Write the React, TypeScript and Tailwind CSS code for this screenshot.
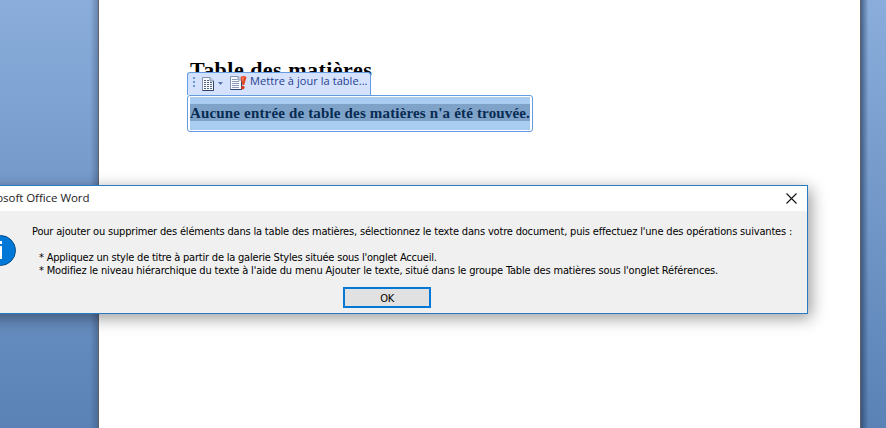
import React from "react";

function DocumentIcon({ update = false }: { update?: boolean }) {
  return (
    <svg className="block shrink-0" width={update ? 17 : 12} height="14" viewBox={update ? "0 0 17 14" : "0 0 12 14"}>
      <path d="M.5 .5H8L11.5 4V13.5H.5Z" fill="#f7faff" stroke="#8392ae" />
      <path d="M11.5 4V13.5H.5" fill="none" stroke="#2f4468" />
      <path d="M8 .5V4H11.5" fill="#c7d5ea" stroke="#8392ae" />
      {update ? (
        <>
          <path d="M2 3.5H7M2 5.5H9M2 7.5H9M2 9.5H9M2 11.5H9" stroke="#8f9cb6" />
          <path d="M10.500 1Q13.500-1 16.500 1.200L14.300 9H12.300Z" fill="#e34a28" />
          <path d="M12 1.500L13.500 1L13 6Z" fill="#f59a78" />
          <circle cx="12.800" cy="11.600" r="1.800" fill="#d93a1c" />
        </>
      ) : (
        <path d="M2 3.500H7M2 5.500H10M2 7.500H10M2 9.500H10M2 11.500H10" stroke="#53647f" strokeDasharray="2 1" />
      )}
    </svg>
  );
}

function TableOfContents() {
  return (
    <div className="pl-[88px] pt-[57px]">
      <h1 className="h-[15px] whitespace-nowrap pl-[3px] font-['Liberation_Serif',serif] text-[22px] font-bold leading-[26px] tracking-[0.48px] text-black">
        Table des matières
      </h1>
      <div className="relative flex h-[23px] w-[184px] rounded-t-[3px] border border-b-0 border-[#659be3] bg-[#d5e2fd] font-['Open_Sans',sans-serif]">
        <div className="ml-[5px] mt-[4px] flex w-[2px] flex-col gap-[2px]">
          <i className="h-[2px] w-[2px] bg-[#6f96d0]" />
          <i className="h-[2px] w-[2px] bg-[#6f96d0]" />
          <i className="h-[2px] w-[2px] bg-[#6f96d0]" />
        </div>
        <div className="ml-[7px] mt-[4px]"><DocumentIcon /></div>
        <svg className="ml-[4px] mt-[9px] shrink-0" width="5" height="3"><path d="M0 0H5L2.500 3Z" fill="#5274aa" /></svg>
        <div className="ml-[7px] mt-[3px]"><DocumentIcon update /></div>
        <span className="ml-[3px] whitespace-nowrap text-[11px] leading-[15px] tracking-[0.06px] text-[#263f91]">Mettre à jour la table...</span>
      </div>
      <div className="relative h-[37px] w-[346px] rounded-[3px] border border-[#659be3] bg-white px-[2px] py-px">
        <div className="h-full bg-[#a9cdf1] pt-[7px]">
          <p className="h-[17px] whitespace-nowrap bg-[#7fa3c8] font-['Liberation_Serif',serif] text-[15px] font-bold leading-[18px] tracking-[0.165px] text-[#082b54]">
            Aucune entrée de table des matières n'a été trouvée.
          </p>
        </div>
      </div>
    </div>
  );
}

function MessageDialog() {
  return (
    <section className="absolute left-[-34px] top-[185px] h-[129px] w-[842px] border border-[#267bc2] bg-[#f0f0f0] shadow-[3px_4px_15px_rgba(0,0,0,0.4)]">
      <header className="flex h-[25px] items-center justify-between bg-white pl-[6px] pr-[10px]">
        <h2 className="whitespace-nowrap font-['Open_Sans',sans-serif] text-[11.500px] leading-[22px] tracking-[-0.05px] text-[#222] -mt-[2px]">Microsoft Office Word</h2>
        <svg className="-mt-px" width="11" height="11" viewBox="0 0 11 11"><path d="M.5 .5L10.500 10.500M10.500 .5L.5 10.500" stroke="#111" strokeWidth="1.100" /></svg>
      </header>
      <div className="flex h-[76px]">
        <svg className="ml-[18px] mt-[24px] shrink-0" width="31" height="31" viewBox="0 0 31 31">
          <circle cx="15.500" cy="15.500" r="15" fill="#0078d7" stroke="#084d88" />
          <path d="M14 6H17V9H14ZM14 11H17V24H14Z" fill="white" />
        </svg>
        <div className="ml-[16px] mt-[14px] whitespace-nowrap font-['DejaVu_Sans_Condensed','DejaVu_Sans',sans-serif] text-[11px] leading-[13px] text-black">
          <p className="tracking-[-0.18px]">Pour ajouter ou supprimer des éléments dans la table des matières, sélectionnez le texte dans votre document, puis effectuez l'une des opérations suivantes :</p>
          <p className="ml-[7px] mt-[13px] tracking-[-0.21px]">* Appliquez un style de titre à partir de la galerie Styles située sous l'onglet Accueil.</p>
          <p className="ml-[7px] tracking-[-0.17px]">* Modifiez le niveau hiérarchique du texte à l'aide du menu Ajouter le texte, situé dans le groupe Table des matières sous l'onglet Références.</p>
        </div>
      </div>
      <button className="mx-auto block h-[21px] w-[88px] border-2 border-[#0078d7] bg-[#e1e1e1] text-center font-['DejaVu_Sans_Condensed','DejaVu_Sans',sans-serif] text-[11px] leading-[19px] tracking-[-0.3px] text-black">OK</button>
    </section>
  );
}

export default function App() {
  return (
    <main className="relative flex h-[428px] w-[886px] overflow-hidden bg-linear-to-b from-[#8aaddb] to-[#5a82b5]">
      <div className="w-[98px] shrink-0 bg-linear-to-r from-transparent from-92% to-[#31486b]/40" />
      <div className="w-[763px] shrink-0 border-x border-[#606267] bg-white">
        <TableOfContents />
      </div>
      <div className="flex-1 bg-linear-to-r from-[#243b60]/65 to-transparent to-30%" />
      <MessageDialog />
    </main>
  );
}
